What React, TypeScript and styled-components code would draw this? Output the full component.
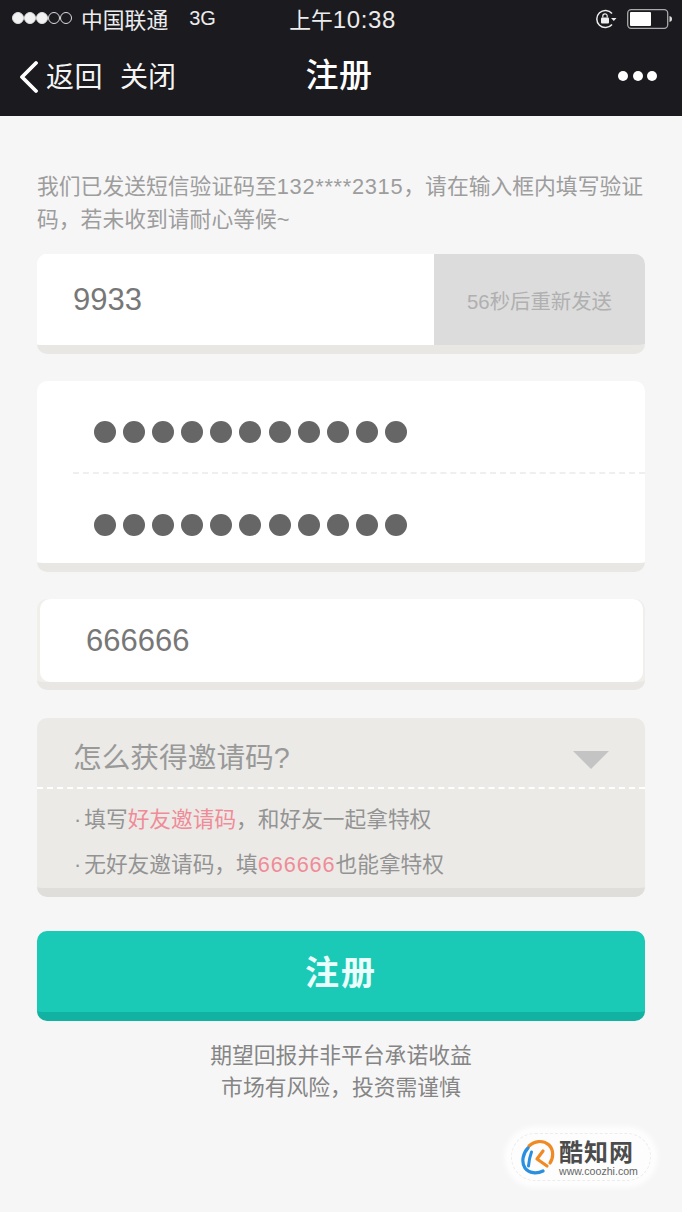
import styled, { createGlobalStyle } from 'styled-components'
import { ReactNode } from 'react'

const GlobalStyle = createGlobalStyle`
    html, body {
        margin: 0;
        padding: 0;
        background: #f6f6f6;
    }
    * {
        box-sizing: border-box;
    }
`
const Page = styled.div`
    position: relative;
    width: 682px;
    height: 1212px;
    overflow: hidden;
    background: #f6f6f6;
    font-family: "Liberation Sans", "Noto Sans CJK SC", sans-serif;
`
const Header = styled.div`
    height: 116px;
    background: #1a1a1f;
    color: #fff;
`
const StatusBar = styled.div`
    height: 36px;
    padding: 0 9px 0 12px;
    display: grid;
    grid-template-columns: 1fr auto 1fr;
    align-items: center;
    font-size: 21.8px;
    color: #ececec;
`
const StatusLeft = styled.div`
    display: flex;
    align-items: center;
`
const Signal = styled.div`
    display: flex;
    margin-right: 9px;
`
const SignalDot = styled.span<{ $on: boolean }>`
    width: 12px;
    height: 12px;
    border-radius: 50%;
    border: 1px solid #ddd;
    background: ${(p) => (p.$on ? '#f2f2f2' : 'transparent')};
`
const Network = styled.span`
    margin-left: 21px;
    font-size: 20px;
`
const Clock = styled.div`
    display: flex;
    align-items: baseline;
`
const ClockDigits = styled.span`
    font-size: 24px;
    letter-spacing: 0.6px;
`
const StatusRight = styled.div`
    display: flex;
    justify-content: flex-end;
    align-items: center;
    gap: 10px;
    margin-top: 2px;
`
const Nav = styled.div`
    height: 80px;
    padding: 0 25px 2px 18px;
    display: grid;
    grid-template-columns: 1fr auto 1fr;
    align-items: center;
`
const NavLeft = styled.div`
    display: flex;
    align-items: center;
    font-size: 28px;
    color: #f4f4f4;
`
const BackIcon = styled.svg`
    margin-top: 3px;
`
const BackText = styled.span`
    margin-left: 8px;
    margin-right: 17px;
    letter-spacing: 0.5px;
`
const NavTitle = styled.div`
    margin: 0 0 4px 3px;
    font-size: 33px;
    font-weight: 500;
    letter-spacing: 0.5px;
`
const More = styled.div`
    display: flex;
    justify-content: flex-end;
    gap: 4.5px;
    margin-top: 2px;
`
const MoreDot = styled.span`
    width: 10px;
    height: 10px;
    border-radius: 50%;
    background: #fff;
`
const Content = styled.div`
    padding: 54px 37px 0;
`
const Intro = styled.p`
    margin: 0 0 18px;
    font-size: 21.8px;
    line-height: 33px;
    color: #9d9d9d;
`
const IntroNumber = styled.span`
    letter-spacing: 0.7px;
`
const Card = styled.div<{ $mt?: number }>`
    margin-top: ${(p) => p.$mt ?? 0}px;
    border-radius: 10px;
    border-bottom: 9px solid #e8e7e3;
    background: #fff;
    overflow: hidden;
`
const CodeRow = styled.div`
    display: flex;
    height: 100px;
    margin-bottom: -9px;
`
const CodeValue = styled.div`
    flex: 1;
    height: 91px;
    padding-left: 36px;
    display: flex;
    align-items: center;
    font-size: 31px;
    color: #777;
    background: #fff;
`
const ResendButton = styled.div`
    width: 211px;
    height: 100px;
    display: flex;
    align-items: center;
    justify-content: center;
    font-size: 20.4px;
    color: #b0b0b0;
    background: #dcdcdc;
    border-bottom: 9px solid #cbcbcb;
`
const PasswordRow = styled.div<{ $divided?: boolean }>`
    height: ${(p) => (p.$divided ? 93 : 89)}px;
    margin-left: 36px;
    padding: ${(p) => (p.$divided ? 11 : 13)}px 0 0 21px;
    display: flex;
    align-items: center;
    gap: 7.1px;
    border-bottom: ${(p) => (p.$divided ? '2px dashed #efefef' : 'none')};
`
const PasswordDot = styled.span`
    width: 22px;
    height: 22px;
    border-radius: 50%;
    background: #666;
`
const InviteInput = styled.div`
    margin: 27px 0 0;
    height: 91px;
    border-radius: 10px;
    border-bottom: 8px solid #e8e7e3;
    background: #f0efec;
`
const InviteValue = styled.div`
    height: 83px;
    margin: 0 2px 0 3px;
    padding-left: 46px;
    display: flex;
    align-items: center;
    font-size: 31px;
    color: #777;
    background: #fff;
    border-radius: 10px;
`
const Help = styled.div`
    margin-top: 28px;
    height: 179px;
    border-radius: 10px;
    border-bottom: 9px solid #dfdedb;
    background: #ebeae7;
    overflow: hidden;
`
const HelpHead = styled.div`
    height: 71px;
    margin-bottom: 8px;
    padding: 6px 36px 0;
    display: flex;
    align-items: center;
    justify-content: space-between;
    font-size: 28.7px;
    color: #999;
    border-bottom: 2px dashed #fff;
`
const Caret = styled.span`
    width: 0;
    height: 0;
    margin-top: 8px;
    border-left: 18px solid transparent;
    border-right: 18px solid transparent;
    border-top: 18px solid #c4c4c4;
`
const HelpLine = styled.div`
    display: flex;
    padding-left: 37px;
    font-size: 21.7px;
    line-height: 45px;
    color: #939393;
`
const Bullet = styled.span`
    margin-right: 3px;
`
const Pink = styled.span<{ $digits?: boolean }>`
    color: #f08c98;
    letter-spacing: ${(p) => (p.$digits ? '0.9px' : 'normal')};
`
const SubmitButton = styled.div`
    margin-top: 34px;
    height: 90px;
    padding-bottom: 3px;
    display: flex;
    align-items: center;
    justify-content: center;
    border-radius: 10px;
    border-bottom: 9px solid #12b2a2;
    background: #1bc9b7;
    color: #eafffb;
    font-size: 34px;
    font-weight: 700;
    letter-spacing: 2px;
`
const Notice = styled.p`
    margin: 19px 0 0;
    text-align: center;
    font-size: 21.8px;
    line-height: 32px;
    color: #858585;
`
const Watermark = styled.div`
    position: absolute;
    left: 508px;
    top: 1130px;
    width: 146px;
    height: 54px;
    display: flex;
    align-items: center;
    gap: 4px;
    padding-left: 13px;
    border-radius: 27px;
    background: #fdfdfd;
    box-shadow: 0 0 6px 3px #fff;
    outline: 1px dashed #ececec;
    outline-offset: -4px;
`
const MarkText = styled.div`
    display: flex;
    flex-direction: column;
    margin-top: 2px;
`
const MarkName = styled.span`
    font-size: 24px;
    line-height: 26px;
    font-weight: 700;
    letter-spacing: 1px;
    color: #4c4c4c;
`
const MarkUrl = styled.span`
    font-size: 10.6px;
    line-height: 10px;
    color: #666;
`

const Row = ({ children, divided }: { children: ReactNode; divided?: boolean }) => (
    <PasswordRow $divided={divided}>{children}</PasswordRow>
)

const dots = Array.from({ length: 11 }, (_, i) => i)

export default function App() {
    return (
        <Page>
            <GlobalStyle />
            <Header>
                <StatusBar>
                    <StatusLeft>
                        <Signal>
                            {[0, 1, 2, 3, 4].map((i) => (
                                <SignalDot key={i} $on={i < 3} />
                            ))}
                        </Signal>
                        中国联通
                        <Network>3G</Network>
                    </StatusLeft>
                    <Clock>
                        上午<ClockDigits>10:38</ClockDigits>
                    </Clock>
                    <StatusRight>
                        <svg width="22" height="20" viewBox="0 0 22 20" fill="none">
                            <path d="M17 4.500A8.600 8.600 0 1 0 17 15.500" stroke="#eee" strokeWidth="1.5" />
                            <path d="M16 9h5.500l-2.700 3z" fill="#eee" />
                            <rect x="6" y="8.500" width="8" height="6" rx="1" fill="#eee" />
                            <path d="M7.800 8.500V7a2.200 2.200 0 0 1 4.400 0v1.500" stroke="#eee" strokeWidth="1.200" />
                        </svg>
                        <svg width="46" height="20" viewBox="0 0 46 20" fill="none">
                            <rect x="0.700" y="0.700" width="40" height="18.600" rx="3.500" stroke="#aaa" strokeWidth="1.300" />
                            <rect x="3" y="3" width="21" height="14" rx="1" fill="#fff" />
                            <path d="M42.500 7c1.800 0.300 2.500 1.500 2.500 3s-0.700 2.700-2.500 3z" fill="#ddd" />
                        </svg>
                    </StatusRight>
                </StatusBar>
                <Nav>
                    <NavLeft>
                        <BackIcon width="20" height="34" viewBox="0 0 20 34" fill="none">
                            <path d="M18 3L4 17l14 14" stroke="#fff" strokeWidth="3.800" strokeLinecap="round" strokeLinejoin="round" />
                        </BackIcon>
                        <BackText>返回</BackText>
                        关闭
                    </NavLeft>
                    <NavTitle>注册</NavTitle>
                    <More>
                        <MoreDot />
                        <MoreDot />
                        <MoreDot />
                    </More>
                </Nav>
            </Header>
            <Content>
                <Intro>
                    我们已发送短信验证码至<IntroNumber>132****2315</IntroNumber>，请在输入框内填写验证
                    <br />
                    码，若未收到请耐心等候~
                </Intro>
                <Card>
                    <CodeRow>
                        <CodeValue>9933</CodeValue>
                        <ResendButton>56秒后重新发送</ResendButton>
                    </CodeRow>
                </Card>
                <Card $mt={27}>
                    <Row divided>
                        {dots.map((i) => (
                            <PasswordDot key={i} />
                        ))}
                    </Row>
                    <Row>
                        {dots.map((i) => (
                            <PasswordDot key={i} />
                        ))}
                    </Row>
                </Card>
                <InviteInput>
                    <InviteValue>666666</InviteValue>
                </InviteInput>
                <Help>
                    <HelpHead>
                        怎么获得邀请码?
                        <Caret />
                    </HelpHead>
                    <HelpLine>
                        <Bullet>·</Bullet>填写<Pink>好友邀请码</Pink>，和好友一起拿特权
                    </HelpLine>
                    <HelpLine>
                        <Bullet>·</Bullet>无好友邀请码，填<Pink $digits>666666</Pink>也能拿特权
                    </HelpLine>
                </Help>
                <SubmitButton>注册</SubmitButton>
                <Notice>
                    期望回报并非平台承诺收益
                    <br />
                    市场有风险，投资需谨慎
                </Notice>
            </Content>
            <Watermark>
                <svg width="34" height="38" viewBox="0 0 34 38" fill="none">
                    <path d="M8 8C13 3 22 1.500 28 7c5 5 4.500 13 1 18" stroke="#ef8a25" strokeWidth="3.200" strokeLinecap="round" />
                    <path d="M7 10C2 15 0 24 4 30c4 5.500 12 6 18 3" stroke="#2b8fe0" strokeWidth="3.200" strokeLinecap="round" />
                    <path d="M10.500 14C9 18 8 23 7.500 28" stroke="#2b8fe0" strokeWidth="3" strokeLinecap="round" />
                    <path d="M22 13l-6 8 10 7" stroke="#ef8a25" strokeWidth="3.200" strokeLinecap="round" strokeLinejoin="round" />
                </svg>
                <MarkText>
                    <MarkName>酷知网</MarkName>
                    <MarkUrl>www.coozhi.com</MarkUrl>
                </MarkText>
            </Watermark>
        </Page>
    )
}
